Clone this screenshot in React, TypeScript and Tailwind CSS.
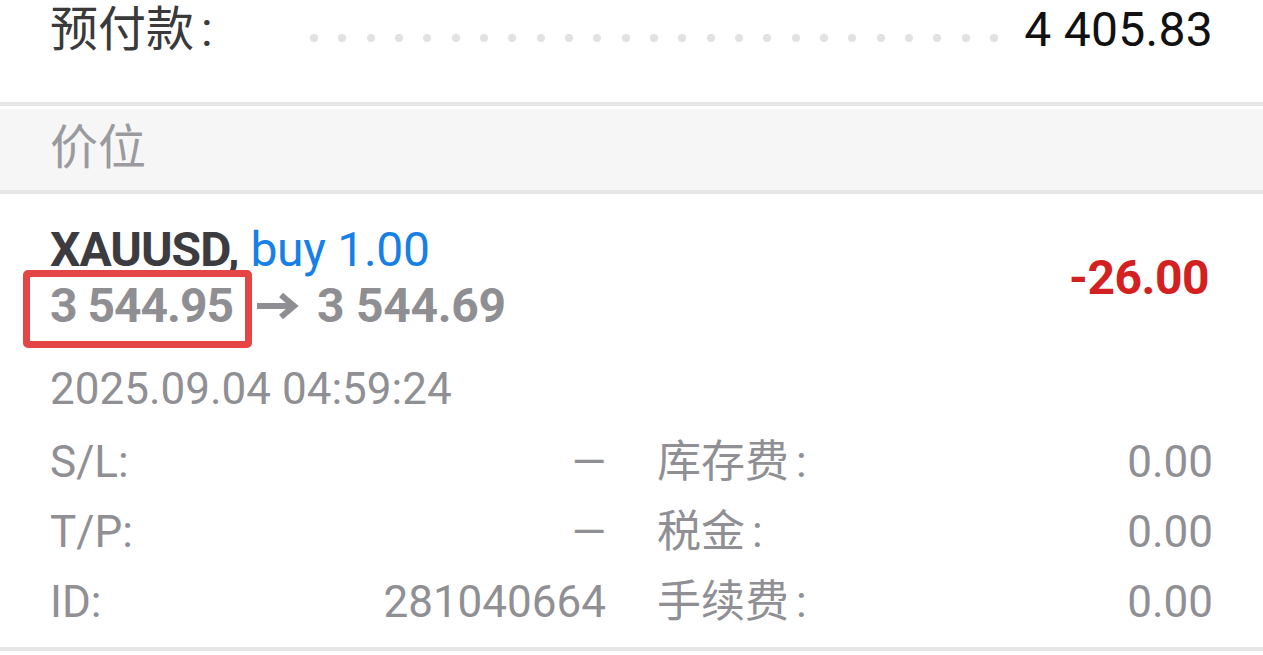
export default function App() {
  const dots = Array.from({ length: 25 });
  const rows: [string, string, string, string][] = [
    ["S/L:", "—", "库存费", "0.00"],
    ["T/P:", "—", "税金", "0.00"],
    ["ID:", "281040664", "手续费", "0.00"],
  ];
  return (
    <div className="w-[1263px] h-[655px] bg-white overflow-hidden font-['Roboto','Noto_Sans_CJK_SC',sans-serif]">
      <div className="h-[102px] flex items-start px-[50px] pt-[6px]">
        <div className="w-[260px] text-[48px] leading-[48px] text-[#3a3a3a]">
          预付款<span className="ml-[7px]">:</span>
        </div>
        <div className="flex-1 flex justify-between pt-[28px] mr-[26px]">
          {dots.map((_, i) => (
            <span key={i} className="block w-[8px] h-[8px] rounded-full bg-[#e2e2e2]" />
          ))}
        </div>
        <div className="text-[48px] leading-[48px] text-[#111111] tracking-[0.3px]">4 405.83</div>
      </div>
      <div className="h-[4px] bg-[#e6e6e6]" />
      <div className="h-[3px] bg-white" />
      <div className="h-[81px] bg-[#f6f6f6] pl-[50px] pt-[15px] text-[48px] leading-[48px] text-[#9a9a9f]">
        价位
      </div>
      <div className="h-[4px] bg-[#e6e6e6]" />
      <div className="px-[50px] pt-[28px] h-[453px]">
        <div className="flex items-center justify-between">
          <div className="text-[48px] leading-[56px]">
            <div>
              <span className="font-bold text-[#3c3c40] tracking-[-1px]">XAUUSD,</span>{" "}
              <span className="text-[#1680e6] tracking-[-0.3px]">buy 1.00</span>
            </div>
            <div className="font-bold text-[#8e8e93] flex items-center">
              <span className="relative tracking-[-1px]">
                3 544.95
                <span className="absolute left-[-27px] right-[-19px] top-[-8px] bottom-[-14px] border-[7px] border-[#e54545] rounded-[5px]" />
              </span>
              <svg width="44" height="30" viewBox="0 0 44 30" className="ml-[22px] mr-[18px]">
                <path d="M2 15 H38 M26 4 L39 15 L26 26" fill="none" stroke="#8e8e93" strokeWidth="6" strokeLinejoin="miter" />
              </svg>
              <span className="tracking-[-0.3px]">3 544.69</span>
            </div>
          </div>
          <div className="mr-[4px] text-[48px] leading-[56px] font-bold text-[#d32020] tracking-[-0.5px]">-26.00</div>
        </div>
        <div className="mt-[20px] text-[44px] leading-[70px] text-[#8f8f94]">2025.09.04 04:59:24</div>
        <div className="mt-[3px] grid grid-cols-2 gap-x-[51px] text-[44px] leading-[70px] text-[#8f8f94]">
          {rows.map(([a, b, c, d]) => (
            <div key={a} className="contents">
              <div className="flex justify-between">
                <span>{a}</span>
                <span>{b}</span>
              </div>
              <div className="flex justify-between">
                <span>
                  {c}
                  <span className="ml-[7px]">:</span>
                </span>
                <span>{d}</span>
              </div>
            </div>
          ))}
        </div>
      </div>
      <div className="h-[4px] bg-[#e6e6e6]" />
    </div>
  );
}
